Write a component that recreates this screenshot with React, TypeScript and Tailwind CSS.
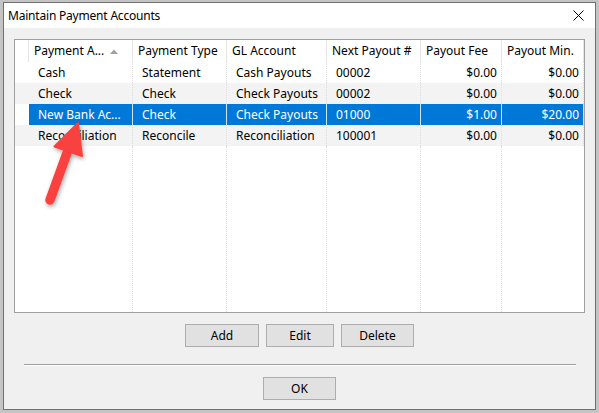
import React from "react";

type Row = { c: string[]; sel?: boolean };

const widths = ["w-[14px]", "w-[104px]", "w-[94px]", "w-[100px]", "w-[94px]", "w-[81px]", "w-[82px]"];
const rightAligned = [false, false, false, false, false, true, true];

const rows: Row[] = [
  { c: ["", "Cash", "Statement", "Cash Payouts", "00002", "$0.00", "$0.00"] },
  { c: ["", "Check", "Check", "Check Payouts", "00002", "$0.00", "$0.00"] },
  { c: ["", "New Bank Ac...", "Check", "Check Payouts", "01000", "$1.00", "$20.00"], sel: true },
  { c: ["", "Reconciliation", "Reconcile", "Reconciliation", "100001", "$0.00", "$0.00"] },
];

const headers = ["", "Payment A...", "Payment Type", "GL Account", "Next Payout #", "Payout Fee", "Payout Min."];

function Btn({ label, w }: { label: string; w: string }) {
  return (
    <div className={`${w} h-[23px] bg-[#e1e1e1] border border-[#adadad] flex items-center justify-center text-[12px] text-black`}>
      {label}
    </div>
  );
}

export default function App() {
  return (
    <div className="relative w-[599px] h-[413px] bg-[#c4c4c4] pt-[2px] pl-[3px] pr-[3px] pb-[3px] font-['Noto_Sans',sans-serif] text-[12px] text-black overflow-hidden">
      <div className="h-full border border-[#707070] flex flex-col bg-[#f0f0f0]">
        {/* Title bar */}
        <div className="h-[25px] bg-white flex items-center justify-between pl-[4px] pr-[11px] shrink-0">
          <span className="leading-none tracking-[-0.2px]">Maintain Payment Accounts</span>
          <svg width="11" height="11" viewBox="0 0 11 11">
            <path d="M0.5 0.5 L10.5 10.5 M10.5 0.5 L0.5 10.5" stroke="#000" strokeWidth="1" fill="none" />
          </svg>
        </div>
        {/* Body */}
        <div className="flex-1 flex flex-col px-[10px] pt-[11px]">
          {/* List view */}
          <div className="h-[274px] border border-[#a0a0a0] bg-white flex flex-col">
            {/* Header */}
            <div className="flex h-[22px] shrink-0">
              {headers.map((h, i) => (
                <div
                  key={i}
                  className={`${widths[i]} shrink-0 h-full border-r border-[#e5e5e5] flex items-center pl-[5px] whitespace-nowrap overflow-hidden`}
                >
                  <span className="leading-none">{h}</span>
                  {i === 1 && (
                    <svg width="8" height="5" viewBox="0 0 8 5" className="ml-[6px]">
                      <path d="M0 5 L4 0.5 L8 5 Z" fill="#a0a0a0" />
                    </svg>
                  )}
                </div>
              ))}
            </div>
            {/* Rows */}
            {rows.map((r, ri) => (
              <div key={ri} className={`flex h-[21px] shrink-0 ${ri % 2 === 1 ? "bg-[#f3f3f3]" : "bg-white"}`}>
                {r.c.map((cell, ci) => {
                  const selCell = r.sel && ci > 0;
                  return (
                    <div
                      key={ci}
                      className={`${widths[ci]} shrink-0 h-full flex items-center whitespace-nowrap overflow-hidden ${
                        rightAligned[ci] ? "justify-end pr-[4px]" : "pl-[9px]"
                      } ${
                        selCell
                          ? "bg-[#0078d7] text-white border-r border-solid border-[#cfe3f6]"
                          : ci === 0
                          ? ""
                          : "border-r border-dotted border-[#dcdcdc]"
                      } ${r.sel && ci === 0 ? "bg-white" : ""}`}
                    >
                      <span className="leading-none">{cell}</span>
                    </div>
                  );
                })}
              </div>
            ))}
            {/* Filler */}
            <div className="flex flex-1">
              {widths.map((w, i) => (
                <div
                  key={i}
                  className={`${w} shrink-0 h-full ${i === 0 || i === 6 ? "" : "border-r border-dotted border-[#dcdcdc]"}`}
                />
              ))}
            </div>
          </div>
          {/* Buttons */}
          <div className="mt-[11px] flex justify-center gap-[7px]">
            <Btn label="Add" w="w-[74px]" />
            <Btn label="Edit" w="w-[68px]" />
            <Btn label="Delete" w="w-[73px]" />
          </div>
          {/* Separator */}
          <div className="mt-[17px] ml-[10px] mr-[9px] border-t border-[#a0a0a0] border-b border-b-white" />
          {/* OK */}
          <div className="mt-[11px] flex justify-center">
            <Btn label="OK" w="w-[73px]" />
          </div>
        </div>
      </div>
      {/* Red annotation arrow */}
      <svg className="absolute left-0 top-0 pointer-events-none" width="599" height="413" viewBox="0 0 599 413">
        <defs>
          <filter id="sh" x="-50%" y="-50%" width="200%" height="200%">
            <feDropShadow dx="1" dy="2" stdDeviation="2" floodColor="#000" floodOpacity="0.35" />
          </filter>
        </defs>
        <g filter="url(#sh)">
          <line x1="50" y1="200" x2="67" y2="153" stroke="#f9423f" strokeWidth="9.5" strokeLinecap="round" />
          <polygon points="78,123 82,156 54.5,146.5" fill="#f9423f" stroke="#f9423f" strokeWidth="2" strokeLinejoin="round" />
        </g>
      </svg>
    </div>
  );
}
